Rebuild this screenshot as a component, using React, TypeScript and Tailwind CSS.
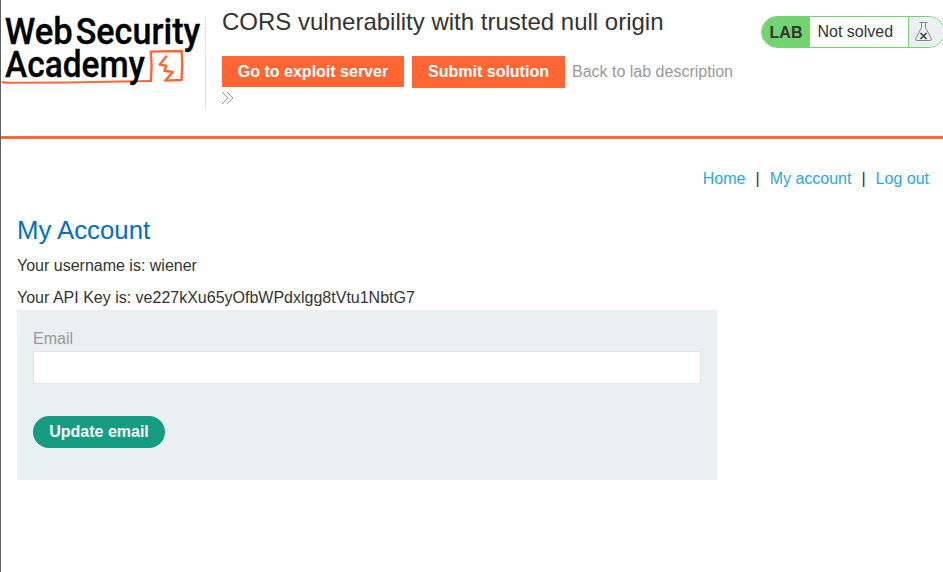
function Logo() {
  return (
    <svg width="204" height="94" viewBox="0 0 204 94" className="block shrink-0 overflow-visible" role="img" aria-label="Web Security Academy">
      <g fontFamily="Roboto, 'Liberation Sans', sans-serif" fontWeight="500" fontSize="37.5" fill="#000" stroke="#000" strokeWidth="0.3">
        <text x="3.7" y="28.3" textLength="68" lengthAdjust="spacingAndGlyphs">Web</text>
        <text x="74.7" y="28.3" textLength="124.5" lengthAdjust="spacingAndGlyphs">Security</text>
      </g>
      <g fill="none" stroke="#ff6633" strokeLinecap="round" strokeLinejoin="round">
        <path d="M1.5 66 Q4 67 9 66.7 L68 66.5 L120 65.5 L149.8 65" strokeWidth="2" />
        <path d="M149.8 65 L150.6 50 L149.7 35.6 L180.7 35 L181.2 49 L180.5 64 L164.3 64.6 L171.8 56 L163.4 54.8 L165.2 49.8 L158.8 48.6 L165.2 40.5" strokeWidth="2.4" />
      </g>
      <text x="4" y="61" textLength="140" lengthAdjust="spacingAndGlyphs" fontFamily="Roboto, 'Liberation Sans', sans-serif" fontWeight="500" fontSize="37" fill="#000" stroke="#000" strokeWidth="0.3">Academy</text>
    </svg>
  );
}

function LabStatus() {
  return (
    <div className="mt-4 ml-4 flex h-8 w-[184px] shrink-0 overflow-hidden rounded-2xl border border-[#72d371] bg-white">
      <span className="w-12 bg-[#72d371] text-center leading-8 font-bold">LAB</span>
      <span className="w-[99px] border-r border-[#72d371] pl-[7.5px] leading-[30px]">Not solved</span>
      <span className="flex-1 bg-[#eaeff2] pt-1 pl-1.5">
        <svg width="17" height="21" viewBox="0 0 17 21" fill="none" stroke="#858585">
          <path d="M4.5 1.5h8M6.5 1.5v5L0.8 17.5q-.8 2 1.2 2h13q2 0 1.2-2L10.5 6.5v-5" />
          <path d="M5.5 12l6 6M11.5 12l-6 6" stroke="#333" strokeWidth="1.4" />
        </svg>
      </span>
    </div>
  );
}

export default function App() {
  return (
    <div className="h-[572px] overflow-hidden border-l border-[#606060] bg-white font-['Liberation_Sans',Arial,sans-serif] text-base text-[#333332]">
      <header className="flex h-[139px] border-b-[3px] border-[#ff6633]">
        <div className="mt-4 h-[94px] w-[205px] shrink-0 border-r border-[#e4e4e4]"><Logo /></div>
        <div className="w-[539px] shrink-0 pt-1.5 pl-4">
          <h2 className="text-2xl leading-8">CORS vulnerability with trusted null origin</h2>
          <div className="mt-[18px] flex items-start leading-8">
            <button className="h-[31px] w-[182px] bg-[#ff6633] leading-[31px] font-bold text-white">Go to exploit server</button>
            <button className="ml-2 h-8 w-[153px] bg-[#ff6633] leading-8 font-bold text-white">Submit solution</button>
            <a className="ml-[7px] text-[#999]">Back to lab description</a>
          </div>
          <svg className="mt-1" width="12" height="12" viewBox="0 0 12 12" fill="none" stroke="#999">
            <path d="M0 0l6 6-6 6M5 0l6 6-6 6" />
          </svg>
        </div>
        <LabStatus />
      </header>
      <main className="px-4">
        <nav className="-mr-0.5 flex justify-end gap-2.5 pt-[30px] leading-5 text-[#29a7e1]">
          <a>Home</a>
          <span className="text-[#333332]">|</span>
          <a>My account</a>
          <span className="text-[#333332]">|</span>
          <a>Log out</a>
        </nav>
        <h1 className="mt-[25px] text-[25.75px] leading-8 text-[#0071bc]">My Account</h1>
        <p className="mt-2 leading-6">Your username is: wiener</p>
        <p className="mt-2 leading-6">Your API Key is: ve227kXu65yOfbWPdxlgg8tVtu1NbtG7</p>
        <form className="h-[170px] w-[700px] bg-[#eaeff2] px-4 pt-[17px]">
          <label htmlFor="email" className="block h-6 leading-6 text-[#999]">Email</label>
          <input id="email" className="block h-[33px] w-full border border-[#e4e4e4] bg-white px-2" />
          <button type="button" className="mt-8 h-8 w-[132px] rounded-full bg-[#169c80] leading-8 font-bold text-white">Update email</button>
        </form>
      </main>
    </div>
  );
}
